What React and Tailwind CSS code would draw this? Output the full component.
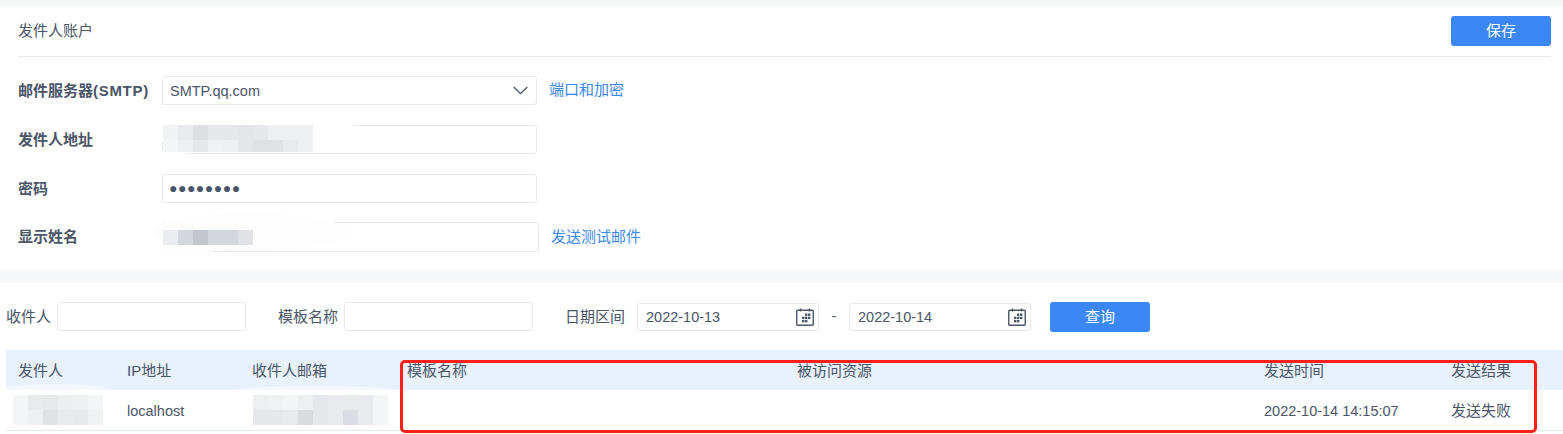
import React from 'react';

const fieldClass = 'bg-white border border-[#e6e8eb] rounded-[3px] text-[14.5px] text-[#4a5568] flex items-center';
const columns = 'grid grid-cols-[109px_125px_155px_390px_467px_187px_1fr] pl-3 items-center text-[15px] text-[#4a5568]';

function Mosaic({ cells, className }) {
  return (
    <div className={`absolute pointer-events-none overflow-hidden ${className}`}>
      {cells.map((row, i) => (
        <div key={i} className="flex">
          {row.map((color, j) => (
            <div key={j} className="w-[15px] h-[15px]" style={{ background: color }} />
          ))}
        </div>
      ))}
    </div>
  );
}

function Smear({ className }) {
  return <div className={`absolute pointer-events-none rounded-[50%] ${className}`} />;
}

function CalendarIcon() {
  return (
    <svg width="18" height="18" viewBox="0 0 18 18" className="shrink-0 text-[#4a5568]">
      <rect x="0.75" y="2.25" width="16.5" height="15" rx="1" fill="none" stroke="currentColor" strokeWidth="1.4" />
      <path d="M4.5 0.5v3M13.5 0.5v3" stroke="currentColor" strokeWidth="1.4" />
      <g fill="currentColor">
        <rect x="9" y="5.5" width="2.4" height="2.4" />
        <rect x="12" y="5.5" width="2.4" height="2.4" />
        <rect x="6" y="8.7" width="2.4" height="2.4" />
        <rect x="9" y="8.7" width="2.4" height="2.4" />
        <rect x="12" y="8.7" width="2.4" height="2.4" />
        <rect x="6" y="12" width="2.4" height="2.4" />
        <rect x="9" y="12" width="2.4" height="2.4" />
      </g>
    </svg>
  );
}

function FormRow({ label, children, className = 'h-[29px]' }) {
  return (
    <div className={`flex items-center ${className}`}>
      <label className="w-[144px] shrink-0 pt-px text-[15px] font-semibold text-[#4a5568]">{label}</label>
      {children}
    </div>
  );
}

function DateField({ value }) {
  return (
    <div className={`${fieldClass} w-[182px] h-[28px] justify-between pl-2 pr-1`}>
      <span className="pt-px">{value}</span>
      <CalendarIcon />
    </div>
  );
}

export default function App() {
  return (
    <div className="w-full h-[434px] overflow-hidden bg-white font-['Liberation_Sans','Noto_Sans_CJK_SC',sans-serif]">
      <div className="h-[6px] bg-[#f6f7f9]" />

      <section className="h-[264px] pl-[18px] pr-3">
        <div className="h-[51px] flex items-start justify-between pt-[10px] border-b border-[#e6e8eb]">
          <h2 className="text-[15px] leading-[30px] text-[#4a5568]">发件人账户</h2>
          <button className="w-[100px] h-[30px] bg-[#3b87f5] text-white text-[15px] rounded-[3px]">保存</button>
        </div>

        <div className="flex flex-col mt-[19px]">
          <FormRow label={<>邮件服务器<span className="tracking-[0.7px]">(SMTP)</span></>}>
            <div className={`${fieldClass} h-full w-[375px] justify-between pl-[7px] pr-2`}>
              <span className="pt-[2px]">SMTP.qq.com</span>
              <svg width="15" height="9" viewBox="0 0 15 9" fill="none" stroke="#4a5568" strokeWidth="1.3">
                <path d="M0.7 1l6.8 6.6L14.3 1" />
              </svg>
            </div>
            <a className="ml-3 text-[15px] text-[#3b87e8]">端口和加密</a>
          </FormRow>

          <FormRow label="发件人地址" className="h-[29px] mt-5">
            <div className={`${fieldClass} h-full w-[375px] relative`}>
              <Smear className="bg-white -left-[12px] -top-[8px] w-[222px] h-[34px]" />
              <div className="absolute pointer-events-none bg-white -left-[2px] bottom-[-3px] w-[26px] h-[6px]" />
              <Mosaic
                className="left-0 -top-[1px] h-[27px]"
                cells={[
                  ['#f1f2f4', '#e9eaed', '#dddfe3', '#e6e7ea', '#e6e7ea', '#e4e5e8', '#e6e7ea', '#eeeff1', '#eeeff1', '#eeeff1'],
                  ['#f4f5f6', '#eeeff1', '#e6e7ea', '#f0f1f2', '#eeeff1', '#e4e5e8', '#dfe1e5', '#dfe1e5', '#e9eaed', '#eeeff1'],
                ]}
              />
            </div>
          </FormRow>

          <FormRow label="密码" className="h-[29px] mt-5">
            <div className={`${fieldClass} h-full w-[375px] px-[6px] text-[14px] tracking-[0.5px] text-[#3f4d68]`}>●●●●●●●●</div>
          </FormRow>

          <FormRow label="显示姓名" className="h-[30px] mt-[19px]">
            <div className={`${fieldClass} h-full w-[377px] relative`}>
              <Smear className="bg-[#fdfdfd] -left-[12px] -top-[10px] w-[197px] h-[38px]" />
              <div className="absolute pointer-events-none bg-[#fdfdfd] -left-[2px] top-[16px] w-[50px] h-[16px]" />
              <Mosaic
                className="left-0 top-[7px]"
                cells={[['#ebecef', '#d3d6da', '#c3c6cc', '#d3d6da', '#d3d6da', '#e0e2e6']]}
              />
            </div>
            <a className="ml-3 text-[15px] text-[#3b87e8]">发送测试邮件</a>
          </FormRow>
        </div>
      </section>

      <div className="h-[13px] bg-[#f6f7f9]" />

      <section className="pl-[6px] pt-[19px]">
        <div className="flex items-center h-[30px] text-[15px] text-[#4a5568]">
          <span className="w-[51px]">收件人</span>
          <div className={`${fieldClass} w-[189px] h-[29px] mb-px`} />
          <span className="ml-[32px] w-[66px]">模板名称</span>
          <div className={`${fieldClass} w-[189px] h-[29px] mb-px`} />
          <span className="ml-[32px] w-[72px]">日期区间</span>
          <DateField value="2022-10-13" />
          <span className="w-[30px] text-center text-[14.5px]">-</span>
          <DateField value="2022-10-14" />
          <button className="ml-[19px] w-[100px] h-[30px] bg-[#3b87f5] text-white text-[15px] rounded-[3px]">查询</button>
        </div>

        <div className="relative mt-[18px]">
          <div className={`${columns} h-[40px] pt-[2px] bg-[#e9f1fd]`}>
            <span>发件人</span>
            <span>IP地址</span>
            <span>收件人邮箱</span>
            <span>模板名称</span>
            <span>被访问资源</span>
            <span>发送时间</span>
            <span>发送结果</span>
          </div>
          <div className={`${columns} h-[41px] pt-[2px] border-b border-[#e1eaf8]`}>
            <span />
            <span className="text-[14.5px] pt-px">localhost</span>
            <span />
            <span />
            <span />
            <span className="text-[14.5px] pt-px">2022-10-14 14:15:07</span>
            <span>发送失败</span>
          </div>

          <Smear className="bg-white opacity-50 -left-[6px] top-[34px] w-[112px] h-[14px]" />
          <Smear className="bg-white opacity-50 left-[225px] top-[36px] w-[170px] h-[10px]" />
          <Mosaic
            className="left-[7px] top-[45px]"
            cells={[
              ['#f4f5f6', '#e9eaec', '#e6e8ea', '#edeef0', '#eeeff1', '#f4f5f6'],
              ['#f4f5f6', '#eeeff1', '#dfe3e6', '#e9eaec', '#e6e8ea', '#f0f1f2'],
            ]}
          />
          <Mosaic
            className="left-[247px] top-[45px]"
            cells={[
              ['#eeeff1', '#f0f1f2', '#f3f4f5', '#eeeff1', '#e6e7ea', '#e9eaed', '#e9eaec', '#e9eaed', '#f4f5f6'],
              ['#e6e7ea', '#e6e7ea', '#e9eaed', '#d9dbdf', '#e6e7ea', '#e9eaed', '#dcdde2', '#e9eaed', '#f4f5f6'],
            ]}
          />

          {/* red highlight drawn on top of the screenshot */}
          <div className="absolute left-[394px] top-[10px] w-[1137px] h-[73px] border-[3px] border-[#ff2015] rounded-[5px] pointer-events-none" />
        </div>
      </section>
    </div>
  );
}
